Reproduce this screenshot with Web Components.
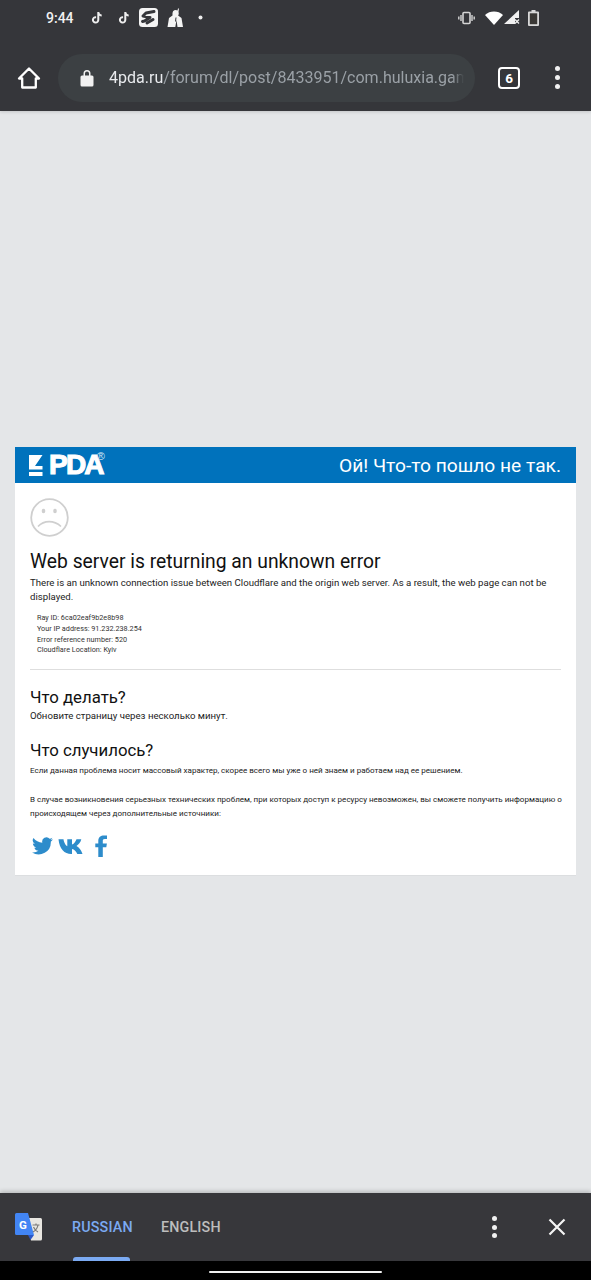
<!DOCTYPE html>
<html>
<head>
<meta charset="utf-8">
<title>4PDA</title>
<style>
    html, body { margin: 0; padding: 0; }
    body { width: 591px; height: 1280px; overflow: hidden; font-family: Roboto, "Noto Sans", sans-serif; background: #e4e6e8; }
    #app { display: flex; flex-direction: column; height: 1280px; }
</style>
</head>
<body>
<div id="app">
    <browser-chrome></browser-chrome>
    <page-area>
        <error-card></error-card>
    </page-area>
    <translate-bar></translate-bar>
    <nav-strip></nav-strip>
</div>
<script>
class BrowserChrome extends HTMLElement {
    constructor() {
        super();
        this.attachShadow({ mode: 'open' });
        this.shadowRoot.innerHTML = `
            <style>
                :host { display: block; height: 111px; background: #35363a; color: #fff; flex: none; position: relative; box-shadow: 0 1px 3px rgba(0,0,0,.15); }
                .status { height: 37px; display: flex; align-items: center; padding: 0 0 2px 46px; box-sizing: border-box; }
                .time { font: 500 14px Roboto, sans-serif; width: 45px; color: #f1f1f1; }
                .left { display: flex; align-items: center; }
                .right { margin-left: auto; display: flex; align-items: center; padding-right: 52px; }
                svg { display: block; }
                .toolbar { height: 74px; display: flex; align-items: center; padding-top: 7px; box-sizing: border-box; }
                .home { margin-left: 17px; width: 24px; }
                .omni { margin-left: 17px; width: 417px; height: 48px; border-radius: 24px; background: #3c4043; display: flex; align-items: center; box-sizing: border-box; padding-left: 22px; }
                .url { margin-left: 15px; white-space: nowrap; font: 400 16.050px Roboto, sans-serif; color: #9aa0a6; -webkit-mask-image: linear-gradient(to right, #000 343px, transparent 355px); mask-image: linear-gradient(to right, #000 343px, transparent 355px); }
                .url b { font-weight: 400; color: #e8eaed; }
                .tabs { margin-left: 23px; width: 22px; height: 22px; border: 2px solid #fff; border-radius: 4px; font: 700 13.500px Roboto, sans-serif; display: flex; align-items: center; justify-content: center; box-sizing: border-box; }
                .more { margin-left: 35px; display: flex; flex-direction: column; gap: 4px; }
                .more i { display: block; width: 5px; height: 5px; border-radius: 50%; background: #f1f1f1; }
            </style>
            <div class="status">
                <span class="time">9:44</span>
                <div class="left">
                    <svg width="12" height="14" viewBox="0 0 12 14"><path fill="#eee" d="M6.300 1h2c.1 1.500 1 2.400 2.400 2.500v2c-.9 0-1.700-.3-2.400-.8v4.100a3.700 3.700 0 1 1-3.200-3.600v2.100a1.700 1.700 0 1 0 1.200 1.600z"/></svg>
                    <svg style="margin-left:15px" width="12" height="14" viewBox="0 0 12 14"><path fill="#eee" d="M6.300 1h2c.1 1.500 1 2.400 2.400 2.500v2c-.9 0-1.700-.3-2.400-.8v4.100a3.700 3.700 0 1 1-3.200-3.600v2.100a1.700 1.700 0 1 0 1.200 1.600z"/></svg>
                    <svg style="margin-left:9px" width="19" height="19" viewBox="0 0 19 19"><rect width="19" height="19" rx="3.500" fill="#f4f4f4"/><path fill="none" stroke="#35363a" stroke-width="3" stroke-linejoin="round" stroke-linecap="round" d="M15 3.500 7 5 4 8l7 1.500L5.500 13l-2 .5M8 15l6-3.500"/></svg>
                    <svg style="margin-left:9px" width="17" height="19" viewBox="0 0 17 19"><path fill="#f4f4f4" d="M5.500 5a3.300 3.300 0 0 1 5-2.500L11 .5h1l-.5 3.500c.4 1 .4 2.500-.4 3.500l3.400 2.500 1.500 9H10.500l-1-7-1.200 7H.5L2 10l3.500-2.500z"/><path stroke="#35363a" stroke-width="1" d="M9 9.500l-.5 4"/></svg>
                    <svg style="margin-left:14px" width="5" height="5" viewBox="0 0 5 5"><circle cx="2.500" cy="2.500" r="2" fill="#eee"/></svg>
                </div>
                <div class="right">
                    <svg width="17" height="14" viewBox="0 0 17 14"><g fill="none" stroke="#d5d5d5"><rect x="5" y="1.500" width="7" height="11" rx="1" stroke-width="1.600"/><path stroke-width="1.400" d="M3 4v6M14 4v6M.8 5.500v3M16.200 5.500v3"/></g></svg>
                    <svg style="margin-left:10px" width="18" height="14" viewBox="0 0 18 14"><path fill="#fff" d="M9 14 0 4a13.500 13.500 0 0 1 18 0z"/></svg>
                    <svg style="margin-left:1px" width="16" height="15" viewBox="0 0 16 15"><path fill="#f0f0f0" d="M15 0v8h-4v6H0z"/><path stroke="#f0f0f0" stroke-width="1.300" d="M11 9.500l4 4M15 9.500l-4 4"/></svg>
                    <svg style="margin-left:8px" width="11" height="16" viewBox="0 0 11 16"><path fill="#d8d8d8" d="M3.500 0h4v1.500H10a1 1 0 0 1 1 1V15a1 1 0 0 1-1 1H1a1 1 0 0 1-1-1V2.500a1 1 0 0 1 1-1h2.500z"/><rect x="1.800" y="3.300" width="7.400" height="10.900" fill="#3a3835"/></svg>
                </div>
            </div>
            <div class="toolbar">
                <svg class="home" width="24" height="24" viewBox="0 0 24 24"><path fill="none" stroke="#fff" stroke-width="2.300" stroke-linejoin="round" d="M12 2.500 2 12.500h3.200v9h13.600v-9H22z"/></svg>
                <div class="omni">
                    <svg width="14" height="18" viewBox="0 0 14 18"><path fill="#f1f1f1" d="M2 6.500h1.500V4.500a3.500 3.500 0 0 1 7 0v2H12a1.500 1.500 0 0 1 1.500 1.500v8a1.500 1.500 0 0 1-1.500 1.500H2A1.500 1.500 0 0 1 .5 16V8A1.500 1.500 0 0 1 2 6.500zm3 0h4V4.500a2 2 0 0 0-4 0z"/></svg>
                    <div class="url"><b>4pda.ru</b>/forum/dl/post/8433951/com.huluxia.gam</div>
                </div>
                <div class="tabs">6</div>
                <div class="more"><i></i><i></i><i></i></div>
            </div>
        `;
    }
}

class PageArea extends HTMLElement {
    constructor() {
        super();
        this.attachShadow({ mode: 'open' });
        this.shadowRoot.innerHTML = `
            <style>
                :host { display: block; flex: 1; min-height: 0; background: #e4e6e8; padding: 336px 15px 0; box-sizing: border-box; }
            </style>
            <slot></slot>
        `;
    }
}

class ErrorCard extends HTMLElement {
    constructor() {
        super();
        this.attachShadow({ mode: 'open' });
        this.shadowRoot.innerHTML = `
            <style>
                :host { display: block; height: 429px; background: #fff; color: #111; border-bottom: 1px solid #dcdee0; box-sizing: border-box; }
                header { height: 36px; background: #0072bc; display: flex; align-items: center; padding: 0 15px 0 14px; }
                .logo { display: flex; align-items: center; }
                .logo svg { display: block; }
                .pda { font: 700 28px/24px "Liberation Sans", Arial, sans-serif; color: #fff; letter-spacing: -1.800px; -webkit-text-stroke: 1.100px #fff; margin-left: 6px; }
                .reg { font: 400 11px "Liberation Sans", sans-serif; color: #d5e8f5; align-self: flex-start; margin: -3px 0 0 -6px; }
                .oops { margin-left: auto; font: 400 19.200px Roboto, sans-serif; color: #fff; }
                main { padding: 15px 14px 0 15px; }
                .smile { display: block; }
                h1 { font: 400 19.300px/24px Roboto, sans-serif; margin: 12px 0 0; }
                p { margin: 0; font: 400 9.650px/14px Roboto, sans-serif; color: #222; }
                .lead { margin-top: 2px; }
                .meta { margin: 9px 0 0 7px; font: 400 7.250px/10.800px Roboto, sans-serif; color: #333; }
                hr { border: none; border-top: 1px solid #dedede; margin: 13px 1px 0 0; }
                h2 { font: 400 16.800px/20px Roboto, sans-serif; margin: 0; }
                .todo { margin-top: 17px; }
                .todo p { margin-top: 2px; }
                .what { margin-top: 17px; }
                .what p { font-size: 8.060px; }
                .what .a { margin-top: 4px; line-height: 14px; }
                .what .b { margin-top: 15px; line-height: 14px; }
                .social { display: flex; align-items: center; margin-top: 14px; margin-left: 2px; }
            </style>
            <header>
                <div class="logo">
                    <svg width="14" height="21" viewBox="0 0 14 21"><path fill="#fff" d="M0 0H13.500L6 11H13.500V14.500H0zM0 17H13.500V21H0z"/></svg>
                    <span class="pda">PDA</span><span class="reg">®</span>
                </div>
                <span class="oops">Ой! Что-то пошло не так.</span>
            </header>
            <main>
                <svg class="smile" width="40" height="40" viewBox="0 0 40 40"><g fill="none" stroke="#cfcfcf"><circle cx="19.500" cy="19.500" r="18.300" stroke-width="1.800"/><path stroke-width="1.700" d="M8 28.500c6-6.500 16-6.500 23 0"/></g><ellipse cx="13.500" cy="13" rx="1.800" ry="2.300" fill="#cfcfcf"/><ellipse cx="25" cy="13" rx="1.800" ry="2.300" fill="#cfcfcf"/></svg>
                <h1>Web server is returning an unknown error</h1>
                <p class="lead">There is an unknown connection issue between Cloudflare and the origin web server. As a result, the web page can not be displayed.</p>
                <div class="meta">
                    Ray ID: 6ca02eaf9b2e8b98<br>
                    Your IP address: 91.232.238.254<br>
                    Error reference number: 520<br>
                    Cloudflare Location: Kyiv
                </div>
                <hr>
                <section class="todo">
                    <h2>Что делать?</h2>
                    <p>Обновите страницу через несколько минут.</p>
                </section>
                <section class="what">
                    <h2>Что случилось?</h2>
                    <p class="a">Если данная проблема носит массовый характер, скорее всего мы уже о ней знаем и работаем над ее решением.</p>
                    <p class="b">В случае возникновения серьезных технических проблем, при которых доступ к ресурсу невозможен, вы сможете получить информацию о происходящем через дополнительные источники:</p>
                </section>
                <div class="social">
                    <svg width="21" height="18" viewBox="0 0 24 20"><path fill="#2d8ccb" d="M24 2.400a9.800 9.800 0 0 1-2.800.8A5 5 0 0 0 23.300.5a9.800 9.800 0 0 1-3.100 1.200 4.900 4.900 0 0 0-8.400 4.500A14 14 0 0 1 1.700.9a4.900 4.900 0 0 0 1.500 6.600 4.900 4.900 0 0 1-2.200-.6c0 2.400 1.700 4.400 3.900 4.900a4.900 4.900 0 0 1-2.200.1 4.900 4.900 0 0 0 4.600 3.400A9.900 9.900 0 0 1 0 17.300 13.900 13.900 0 0 0 21.500 5a10 10 0 0 0 2.500-2.600z"/></svg>
                    <svg style="margin-left:5px" width="28" height="17" viewBox="0 0 28 17"><path fill="#2d8ccb" d="M.5 1.200h5c.4 3 2 6.300 3.800 7V1.200h4.700v5.200c1.600-.2 3.600-2.800 4.500-5.200h4.800c-.6 3-3 5.600-4.800 6.700 1.800 1 4.700 3.300 6 8.100h-5.200c-1-2.500-3-4.800-5.300-5.100V16h-.8C6.500 16 1.500 11 .5 1.200z"/></svg>
                    <svg style="margin-left:9px" width="12" height="22" viewBox="0 0 12 22"><path fill="#2d8ccb" d="M7.800 22V12.300h3.500l.6-3.900H7.800V6c0-1.200.4-1.900 2-1.900H12V.6C11.500.5 10.300.4 8.900.4 5.800.4 3.300 2.300 3.300 5.500v2.900H.3v3.900h3V22z"/></svg>
                </div>
            </main>
        `;
    }
}

class TranslateBar extends HTMLElement {
    constructor() {
        super();
        this.attachShadow({ mode: 'open' });
        this.shadowRoot.innerHTML = `
            <style>
                :host { display: flex; flex: none; align-items: center; height: 68px; background: #37373b; position: relative; box-shadow: 0 -2px 4px rgba(0,0,0,.18); box-sizing: border-box; }
                svg { display: block; }
                .logo { margin-left: 15px; }
                .tab { font: 500 14.300px Roboto, sans-serif; letter-spacing: .2px; }
                .ru { margin-left: 29px; color: #7baaf2; }
                .en { margin-left: 28px; color: #bdbdbd; }
                .more { margin-left: auto; display: flex; flex-direction: column; gap: 3.500px; }
                .more i { display: block; width: 5px; height: 5px; border-radius: 50%; background: #f1f1f1; }
                .close { margin-left: 51px; margin-right: 25px; }
                .ind { position: absolute; left: 73px; bottom: 0; width: 57px; height: 4px; background: #7baaf2; border-radius: 3px 3px 0 0; }
            </style>
            <svg class="logo" width="28" height="28" viewBox="0 0 28 28">
                <path fill="#e8e6e1" d="M12 5h13.500a1.500 1.500 0 0 1 1.500 1.500V26a1.500 1.500 0 0 1-1.500 1.500H16z"/>
                <path fill="#4285f4" d="M1.500 0h11.500l6 22H1.500A1.500 1.500 0 0 1 0 20.500v-19A1.500 1.500 0 0 1 1.500 0z"/>
                <path fill="#2a56c6" d="M13 22h6l-3.500 5z"/>
                <text x="4" y="15.500" font-family="Roboto, sans-serif" font-weight="700" font-size="11.500" fill="#fff">G</text>
                <path fill="none" stroke="#7a7a7a" stroke-width="1.200" d="M17.500 12h7M21 10.500V12M23 12c-.5 3-2.500 5.500-5 7M18.500 14c.8 2 2.500 4 4.500 5"/>
            </svg>
            <span class="tab ru">RUSSIAN</span>
            <span class="tab en">ENGLISH</span>
            <div class="more"><i></i><i></i><i></i></div>
            <svg class="close" width="18" height="18" viewBox="0 0 18 18"><path stroke="#f4f4f4" stroke-width="2.200" d="M1.500 1.500l15 15M16.500 1.500l-15 15"/></svg>
            <div class="ind"></div>
        `;
    }
}

class NavStrip extends HTMLElement {
    constructor() {
        super();
        this.attachShadow({ mode: 'open' });
        this.shadowRoot.innerHTML = `
            <style>
                :host { display: flex; flex: none; justify-content: center; height: 19px; background: #000; padding-top: 10px; box-sizing: border-box; }
                .pill { width: 173px; height: 2px; background: #f0f0f0; border-radius: 1px; }
            </style>
            <div class="pill"></div>
        `;
    }
}

customElements.define('browser-chrome', BrowserChrome);
customElements.define('page-area', PageArea);
customElements.define('error-card', ErrorCard);
customElements.define('translate-bar', TranslateBar);
customElements.define('nav-strip', NavStrip);
</script>
</body>
</html>
